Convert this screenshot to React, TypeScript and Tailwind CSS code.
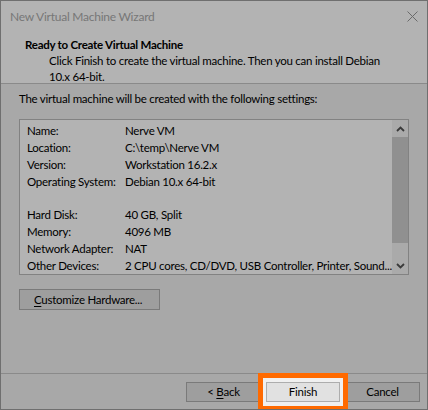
import React from "react";

const SETTINGS: [string, string][] = [
  ["Name:", "Nerve VM"],
  ["Location:", "C:\\temp\\Nerve VM"],
  ["Version:", "Workstation 16.2.x"],
  ["Operating System:", "Debian 10.x 64-bit"],
  ["", ""],
  ["Hard Disk:", "40 GB, Split"],
  ["Memory:", "4096 MB"],
  ["Network Adapter:", "NAT"],
  ["Other Devices:", "2 CPU cores, CD/DVD, USB Controller, Printer, Sound..."],
];

function Chevron({ up }: { up?: boolean }) {
  return (
    <svg width="9" height="6" viewBox="0 0 9 6" aria-hidden="true">
      <path
        d={up ? "M1 5 L4.5 1.5 L8 5" : "M1 1 L4.5 4.5 L8 1"}
        fill="none"
        stroke="#3a3a3a"
        strokeWidth="1.8"
      />
    </svg>
  );
}

export default function App() {
  return (
    <div
      className="relative flex h-[410px] w-[428px] flex-col overflow-hidden border border-[#6f6f6f] bg-[#a8a8a8] text-[11.5px] tracking-[-0.25px] text-black"
      style={{ fontFamily: 'Lato, "Noto Sans", sans-serif' }}
    >
      {/* title bar */}
      <div className="flex h-[31px] shrink-0 items-center justify-between bg-[#b3b3b3] pl-[9px] pr-[9px]">
        <span className="text-[12px] text-[#777777]">New Virtual Machine Wizard</span>
        <svg width="11" height="11" viewBox="0 0 11 11" aria-hidden="true">
          <path d="M0.5 0.5 L10.5 10.5 M10.5 0.5 L0.5 10.5" stroke="#6a6a6a" strokeWidth="1" />
        </svg>
      </div>

      {/* header */}
      <div className="flex h-[52px] shrink-0 flex-col border-b border-[#8a8a8a] bg-[#b3b3b3] pl-[24px] pt-[4px]">
        <span className="h-[17px] font-bold leading-[17px]">Ready to Create Virtual Machine</span>
        <p className="pl-[24px] leading-[16px]">
          Click Finish to create the virtual machine. Then you can install Debian
          <br />
          10.x 64-bit.
        </p>
      </div>

      {/* body */}
      <div className="flex flex-1 flex-col px-[18px] pt-[7px]">
        <span className="leading-[16px]">The virtual machine will be created with the following settings:</span>
        <div className="mt-[12px] flex h-[156px] border border-[#828282] bg-[#b3b3b3]">
          <div className="flex flex-1 flex-col pl-[7px] pt-[2px]">
            {SETTINGS.map(([label, value], i) => (
              <div key={i} className="flex h-[17px] items-center whitespace-nowrap">
                <span className="w-[98px] shrink-0">{label}</span>
                <span>{value}</span>
              </div>
            ))}
          </div>
          <div className="flex w-[16px] shrink-0 flex-col bg-[#aaaaaa]">
            <div className="flex h-[17px] items-center justify-center">
              <Chevron up />
            </div>
            <div className="h-[106px] bg-[#909090]" />
            <div className="flex-1" />
            <div className="flex h-[17px] items-center justify-center">
              <Chevron />
            </div>
          </div>
        </div>
        <div className="mt-[14px]">
          <button
            type="button"
            className="block h-[21px] w-[141px] whitespace-nowrap border border-[#7a7a7a] bg-[#9e9e9e] pl-[14px] text-left"
          >
            <span className="underline underline-offset-2">C</span>ustomize Hardware...
          </button>
        </div>
      </div>

      {/* footer */}
      <div className="flex h-[36px] shrink-0 justify-end gap-[5px] border-t border-[#8a8a8a] pr-[7px] pt-[8px]">
        <button type="button" className="h-[20px] w-[75px] border border-[#7a7a7a] bg-[#9e9e9e]">
          &lt; <span className="underline underline-offset-2">B</span>ack
        </button>
        <button
          type="button"
          className="relative z-10 h-[20px] w-[74px] border border-[#adadad] bg-[#e1e1e1]"
        >
          Finish
        </button>
        <button type="button" className="h-[20px] w-[75px] border border-[#7a7a7a] bg-[#9e9e9e]">
          Cancel
        </button>
      </div>

      {/* highlight frame over the Finish button */}
      <div className="absolute left-[257px] top-[372px] h-[38px] w-[90px] border-[5px] border-[#ff6a00] bg-[#f0f0f0]" />
    </div>
  );
}
